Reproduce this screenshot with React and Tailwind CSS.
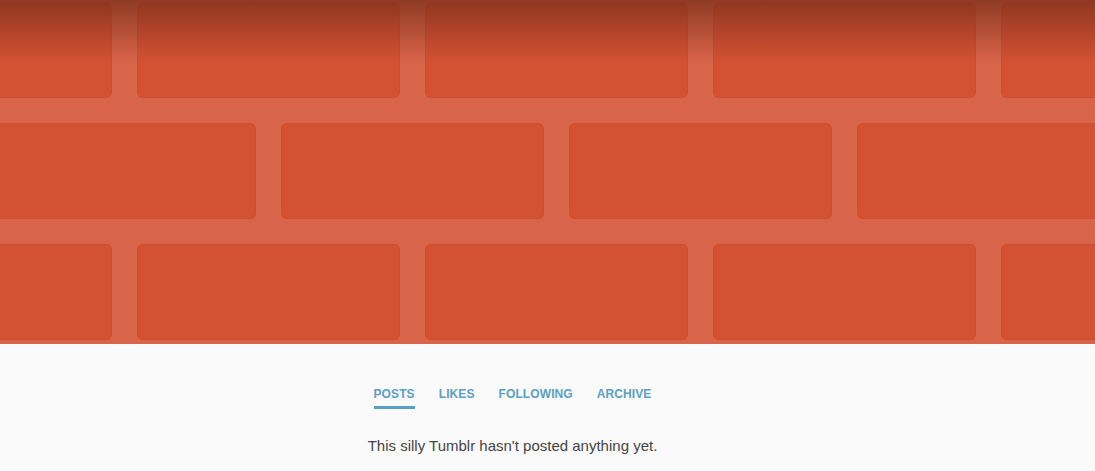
import React from "react";

function BrickRow({ offset, count }) {
  return (
    <div className="flex gap-[25px] h-[96px] shrink-0" style={{ marginLeft: offset }}>
      {Array.from({ length: count }).map((_, i) => (
        <div
          key={i}
          className="w-[263px] h-[96px] shrink-0 rounded-[6px] bg-[#d35233] shadow-[inset_0_0_0_1px_rgba(190,70,40,0.2)]"
        />
      ))}
    </div>
  );
}

export default function App() {
  return (
    <div className="w-[1095px] h-[471px] overflow-hidden bg-[#fafafa]" style={{ fontFamily: '"Liberation Sans", Arial, sans-serif' }}>
      <div className="relative h-[344px] bg-[#d8644a] overflow-hidden flex flex-col gap-[25px] pt-[2px]">
        <BrickRow offset={-151} count={5} />
        <BrickRow offset={-7} count={4} />
        <BrickRow offset={-151} count={5} />
        <div className="absolute inset-x-0 top-0 h-[62px] bg-gradient-to-b from-[rgba(120,45,25,0.75)] to-[rgba(120,45,25,0)]" />
      </div>
      <div className="pr-[70px] flex flex-col items-center">
        <nav className="flex gap-[24px] pt-[43px] text-[12px] font-bold text-[#5a9fc6] tracking-[0.1px]">
          <div className="flex flex-col">
            <span className="leading-[14px]">POSTS</span>
            <span className="mt-[5px] h-[3px] bg-[#5a9fc6]" />
          </div>
          <span className="leading-[14px]">LIKES</span>
          <span className="leading-[14px]">FOLLOWING</span>
          <span className="leading-[14px]">ARCHIVE</span>
        </nav>
        <p className="mt-[28px] text-[15px] leading-[17px] text-[#444444]">
          This silly Tumblr hasn't posted anything yet.
        </p>
      </div>
    </div>
  );
}
